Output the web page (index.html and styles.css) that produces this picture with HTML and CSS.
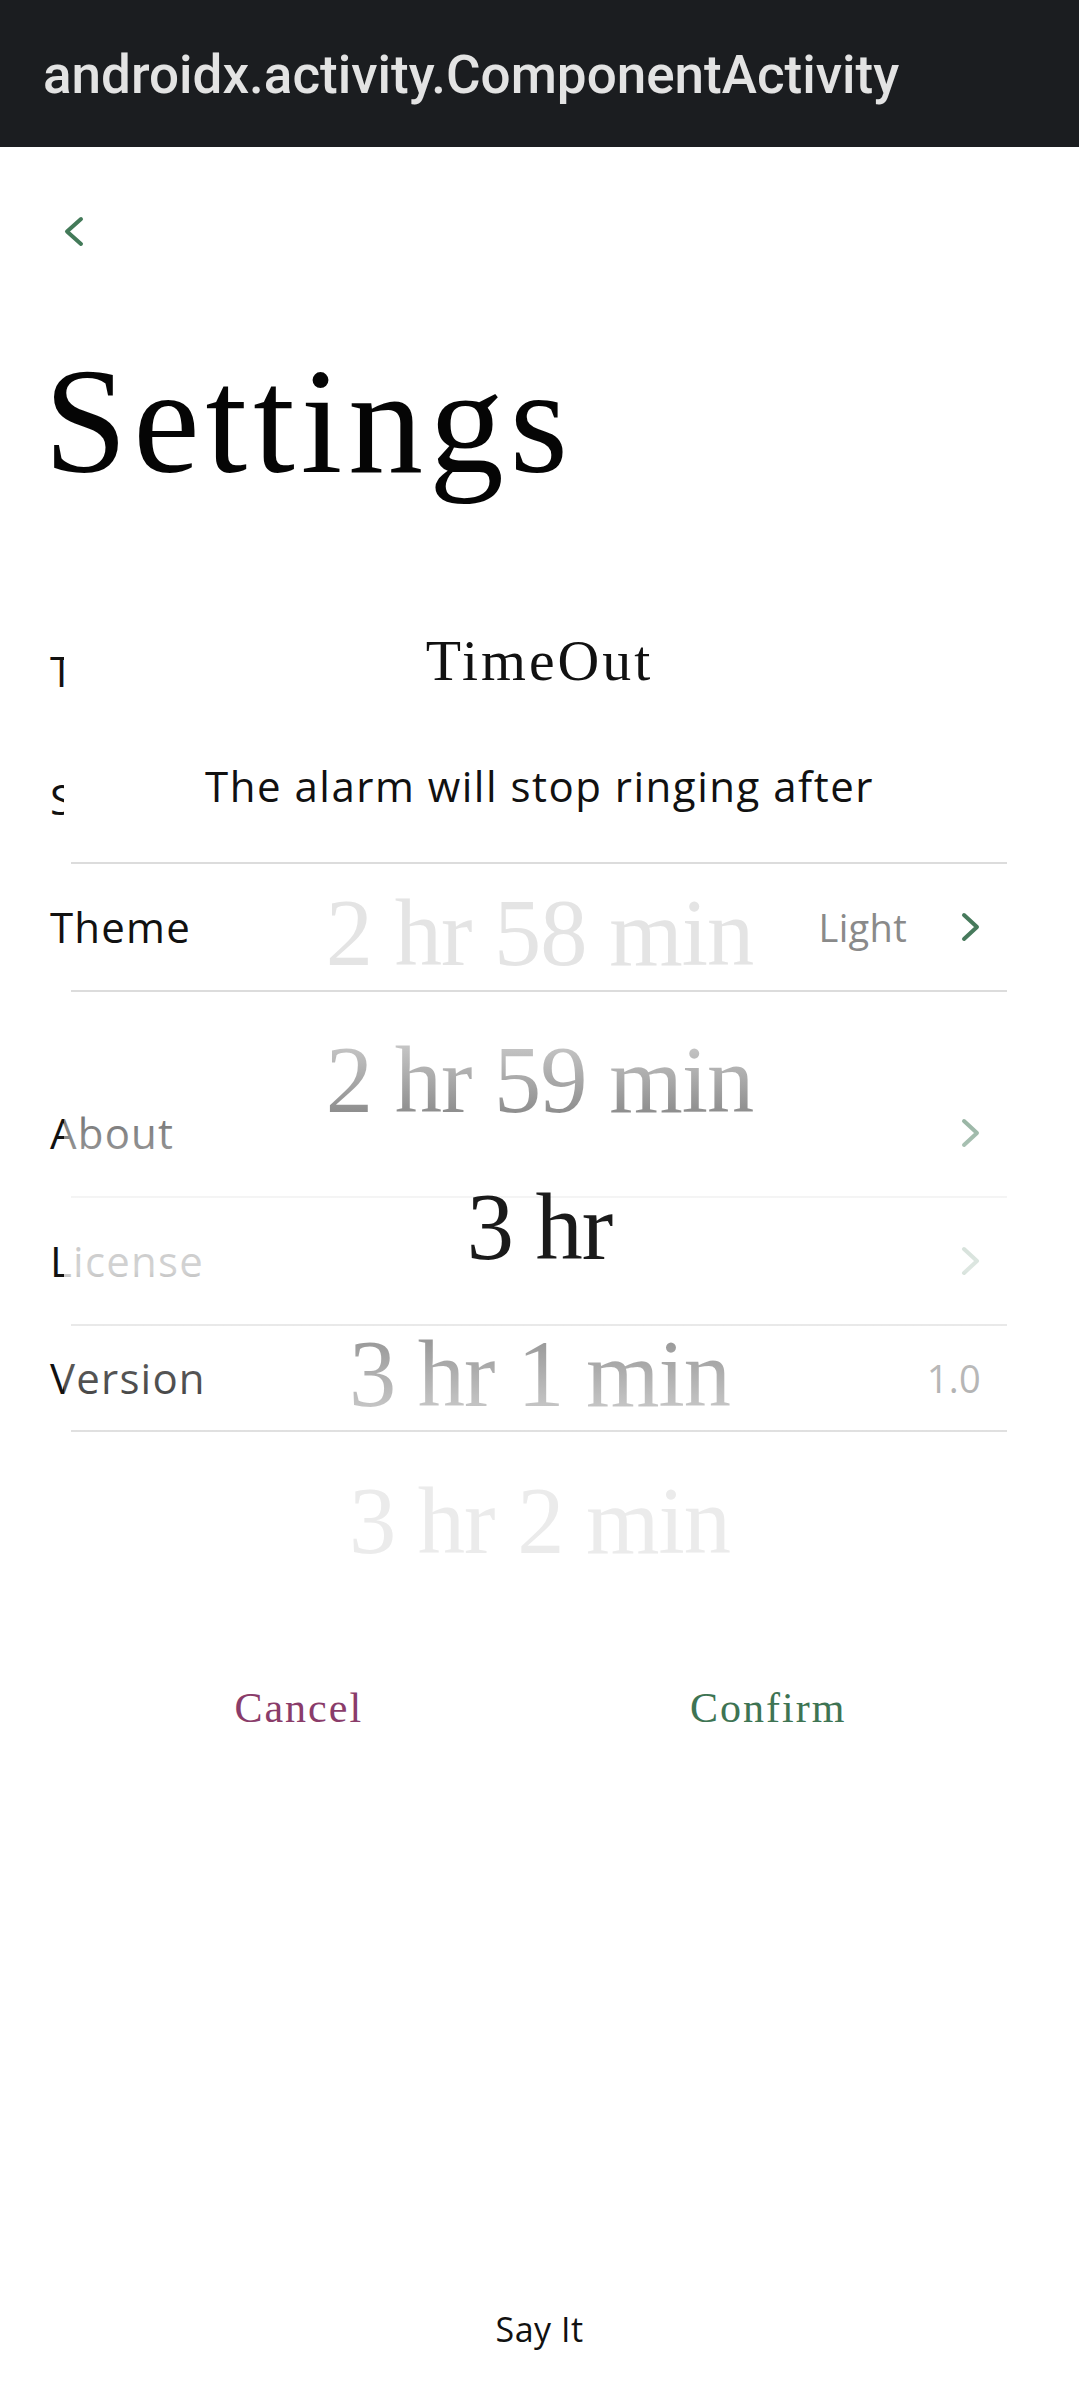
FILE: index.html
```html
<!DOCTYPE html>
<html lang="en">
<head>
<meta charset="utf-8">
<title>Settings</title>
<link rel="stylesheet" href="styles.css">
</head>
<body>
<div class="screen">
  <header class="appbar"><span class="appbar-title">androidx.activity.ComponentActivity</span></header>
  <main class="settings">
    <div class="nav">
      <svg class="back-icon" width="26" height="37" viewBox="0 0 26 37"><path d="M20 6 L6 18.5 L20 31" fill="none" stroke="currentColor" stroke-width="4" stroke-linecap="round" stroke-linejoin="round"/></svg>
    </div>
    <h1 class="title">Settings</h1>
    <div class="list">
      <div class="row"><span class="label">Timeout</span><span class="chev"><svg width="21" height="32" viewBox="0 0 21 32"><path d="M4 4 L17 16 L4 28" fill="none" stroke="currentColor" stroke-width="4" stroke-linecap="round" stroke-linejoin="round"/></svg></span></div>
      <div class="divider"></div>
      <div class="row"><span class="label">Sound</span><span class="chev"><svg width="21" height="32" viewBox="0 0 21 32"><path d="M4 4 L17 16 L4 28" fill="none" stroke="currentColor" stroke-width="4" stroke-linecap="round" stroke-linejoin="round"/></svg></span></div>
      <div class="divider"></div>
      <div class="row"><span class="label">Theme</span><span class="value">Light</span><span class="chev"><svg width="21" height="32" viewBox="0 0 21 32"><path d="M4 4 L17 16 L4 28" fill="none" stroke="currentColor" stroke-width="4" stroke-linecap="round" stroke-linejoin="round"/></svg></span></div>
      <div class="divider"></div>
      <div class="gap"></div>
      <div class="row"><span class="label">About</span><span class="chev"><svg width="21" height="32" viewBox="0 0 21 32"><path d="M4 4 L17 16 L4 28" fill="none" stroke="currentColor" stroke-width="4" stroke-linecap="round" stroke-linejoin="round"/></svg></span></div>
      <div class="divider"></div>
      <div class="row"><span class="label">License</span><span class="chev"><svg width="21" height="32" viewBox="0 0 21 32"><path d="M4 4 L17 16 L4 28" fill="none" stroke="currentColor" stroke-width="4" stroke-linecap="round" stroke-linejoin="round"/></svg></span></div>
      <div class="divider"></div>
      <div class="row short"><span class="label">Version</span><span class="value version">1.0</span></div>
      <div class="divider"></div>
    </div>
  </main>
  <footer class="sayit">Say It</footer>

  <div class="dialog">
    <div class="dialog-head">
      <div class="dialog-title">TimeOut</div>
      <div class="dialog-sub">The alarm will stop ringing after</div>
    </div>
    <div class="picker">
      <div class="item item-far-top">2 hr 58 min</div>
      <div class="item item-near-top">2 hr 59 min</div>
      <div class="item item-selected">3 hr</div>
      <div class="item item-near-bottom">3 hr 1 min</div>
      <div class="item item-far-bottom">3 hr 2 min</div>
    </div>
    <div class="dialog-actions">
      <button class="btn btn-cancel">Cancel</button>
      <button class="btn btn-confirm">Confirm</button>
    </div>
  </div>
</div>
</body>
</html>
```

FILE: styles.css
```css
* {
  box-sizing: border-box;
  margin: 0;
  padding: 0;
}

html,
body {
  width: 1079px;
  height: 2399px;
  background: #ffffff;
}

body {
  font-family: "Open Sans", Lato, sans-serif;
  color: #111111;
  overflow: hidden;
}

.screen {
  position: relative;
  height: 2399px;
  display: flex;
  flex-direction: column;
}

.appbar {
  height: 147px;
  flex: none;
  background: #1b1d20;
  display: flex;
  align-items: center;
  padding: 3px 43px 0;
}

.appbar-title {
  font-family: Roboto, "Liberation Sans", sans-serif;
  font-weight: 500;
  font-size: 53px;
  color: #e3e3e3;
}

.settings {
  display: flex;
  flex-direction: column;
}

.nav {
  height: 200px;
  padding: 66px 0 0 61px;
  color: #437a59;
}

.back-icon {
  display: block;
}

.title {
  font-family: "Liberation Serif", serif;
  font-weight: 400;
  font-size: 149.6px;
  line-height: 149.6px;
  letter-spacing: 6px;
  padding-left: 44px;
  color: #050505;
}

.list {
  margin-top: 111px;
}

.row {
  height: 126px;
  display: flex;
  align-items: center;
  padding: 0 46px 0 50px;
  font-size: 42px;
  line-height: 50px;
  letter-spacing: 1.2px;
  color: #111111;
}

.row.short {
  height: 104px;
}

.label {
  flex: 1;
}

.value {
  font-size: 38px;
  letter-spacing: 0.3px;
  color: #8a8a8a;
}

.value.version {
  margin-right: 52px;
  color: #9c9c9c;
}

.chev {
  width: 126px;
  height: 126px;
  flex: none;
  display: flex;
  align-items: center;
  justify-content: center;
  color: #477a5c;
}

.chev svg {
  display: block;
}

.divider {
  height: 2px;
  margin: 0 72px 0 71px;
  background: #dcdcdc;
}

.gap {
  height: 78px;
}

.sayit {
  margin-top: auto;
  text-align: center;
  font-size: 34px;
  line-height: 48px;
  letter-spacing: 0.5px;
  padding-bottom: 46px;
  color: #111111;
}

/* Dialog overlay */
.dialog {
  position: absolute;
  left: 64px;
  top: 600px;
  width: 951px;
  display: flex;
  flex-direction: column;
}

.dialog-head {
  height: 260px;
  background: #ffffff;
  padding-top: 26px;
  text-align: center;
}

.dialog-title {
  font-family: "Liberation Serif", serif;
  font-size: 57.75px;
  line-height: 69px;
  letter-spacing: 3px;
  color: #111111;
}

.dialog-sub {
  margin-top: 66px;
  font-size: 42px;
  line-height: 50px;
  letter-spacing: 1.5px;
  color: #111111;
}

.picker {
  position: relative;
}

.picker::before {
  content: "";
  position: absolute;
  left: 0;
  right: 0;
  top: 0;
  bottom: 0;
  background: linear-gradient(to bottom,
    rgba(255, 255, 255, 0) 130px,
    rgba(255, 255, 255, 0.5) 277px,
    rgba(255, 255, 255, 0.7) 338px,
    rgba(255, 255, 255, 0.82) 410px,
    rgba(255, 255, 255, 0.35) 467px,
    rgba(255, 255, 255, 0.27) 522px,
    rgba(255, 255, 255, 0.1) 573px,
    rgba(255, 255, 255, 0) 610px);
}

.item {
  position: relative;
  height: 147px;
  line-height: 147px;
  font-family: "Liberation Serif", serif;
  font-size: 94.5px;
  letter-spacing: -1px;
  text-align: center;
  white-space: nowrap;
}

.item-far-top {
  color: #e4e4e4;
}

.item-near-top {
  background: linear-gradient(to bottom, #c4c4c4 40px, #8c8c8c 108px);
  -webkit-background-clip: text;
  background-clip: text;
  color: transparent;
}

.item-selected {
  color: #1a1a1a;
}

.item-near-bottom {
  background: linear-gradient(to bottom, #9a9a9a 40px, #c6c6c6 108px);
  -webkit-background-clip: text;
  background-clip: text;
  color: transparent;
}

.item-far-bottom {
  color: #ebebeb;
}

.dialog-actions {
  background: #ffffff;
  display: flex;
  padding: 88px 12px 80px 0;
}

.btn {
  flex: 1;
  border: 0;
  background: none;
  text-align: center;
  font-family: "Liberation Serif", serif;
  font-size: 42px;
  line-height: 50px;
  letter-spacing: 2px;
}

.btn-cancel {
  color: #8a3c6a;
}

.btn-confirm {
  color: #3e7453;
}
```
